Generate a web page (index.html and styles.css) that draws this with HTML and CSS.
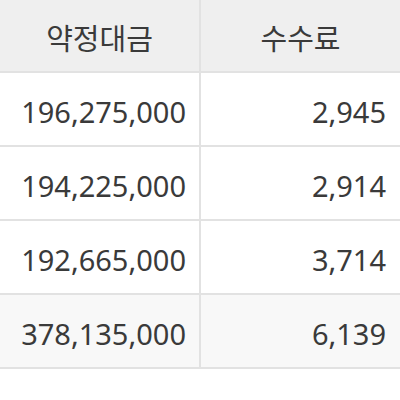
FILE: index.html
```html
<!DOCTYPE html>
<html lang="ko">
<head>
<meta charset="utf-8">
<link rel="stylesheet" href="styles.css">
</head>
<body>
<table class="fee-table">
  <thead>
    <tr><th>약정대금</th><th>수수료</th></tr>
  </thead>
  <tbody>
    <tr><td>196,275,000</td><td>2,945</td></tr>
    <tr><td>194,225,000</td><td>2,914</td></tr>
    <tr><td>192,665,000</td><td>3,714</td></tr>
    <tr class="total"><td>378,135,000</td><td>6,139</td></tr>
  </tbody>
</table>
</body>
</html>
```
FILE: styles.css
```css
html, body {
  margin: 0;
  padding: 0;
  background: #fff;
}
.fee-table {
  width: 400px;
  border-collapse: collapse;
  table-layout: fixed;
  font-family: "Noto Sans", "Noto Sans CJK KR", sans-serif;
  color: #3a3a3a;
}
.fee-table th,
.fee-table td {
  border-bottom: 2px solid #e2e2e2;
  padding: 0 14px;
  box-sizing: border-box;
}
.fee-table th + th,
.fee-table td + td {
  border-left: 2px solid #e2e2e2;
}
.fee-table th {
  height: 72px;
  background: #efefef;
  font-weight: normal;
  font-size: 29px;
  text-align: center;
  padding-top: 2px;
}
.fee-table td {
  height: 74px;
  font-size: 29px;
  line-height: 1;
  text-align: right;
  padding-top: 4px;
}
.fee-table td:first-child {
  padding-right: 13px;
}
.fee-table tr.total td {
  background: #f8f8f8;
}
```
